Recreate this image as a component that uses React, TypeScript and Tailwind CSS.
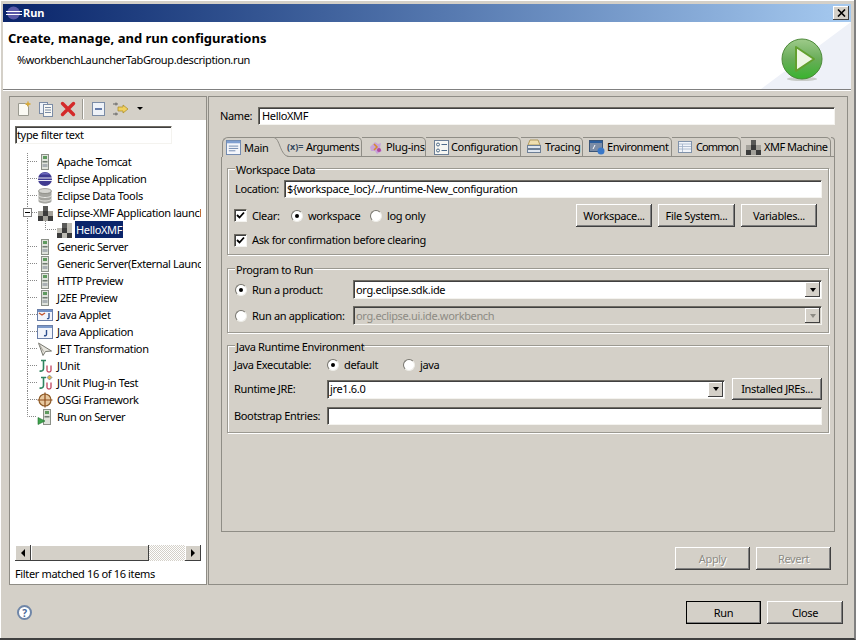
import React from "react";

const sunken =
  "border border-t-[#6f6c64] border-l-[#6f6c64] border-r-[#f4f3ef] border-b-[#f4f3ef] shadow-[inset_1px_1px_0_#404040]";

function ServerIcon() {
  return (
    <svg width="16" height="16" viewBox="0 0 16 16">
      <rect x="4.500" y="0.500" width="7" height="15" fill="#dfe3dc" stroke="#8b9088" />
      <rect x="6" y="2" width="4" height="3" fill="#5f9a5f" />
      <rect x="5.500" y="7" width="5" height="1.500" fill="#6f7a70" />
      <rect x="5.500" y="10" width="5" height="3" fill="#a9b0b4" />
    </svg>
  );
}

function EclipseIcon() {
  return (
    <svg width="16" height="16" viewBox="0 0 16 16">
      <circle cx="8" cy="8" r="7" fill="#3f3a90" />
      <path d="M0 7h16M0 9.500h16" stroke="#fff" strokeWidth="0.900" />
      <path d="M3 3.500a7 7 0 0 1 10 0" fill="#6d68bc" />
    </svg>
  );
}

function DbIcon() {
  return (
    <svg width="16" height="16" viewBox="0 0 16 16">
      <path d="M1.500 3v10c0 1.500 3 2.500 6.500 2.500s6.500-1 6.500-2.500V3z" fill="#a5a5a0" />
      <ellipse cx="8" cy="3" rx="6.500" ry="2.500" fill="#d6d6d2" stroke="#77776f" strokeWidth="0.600" />
      <path d="M1.500 7c0 1.500 3 2.500 6.500 2.500s6.500-1 6.500-2.500M1.500 10.500c0 1.500 3 2.500 6.500 2.500s6.500-1 6.500-2.500" fill="none" stroke="#e8e8e4" />
    </svg>
  );
}

function XmfIcon({ light }: { light?: boolean }) {
  const a = light ? "#bdbbb3" : "#a3a19a";
  const b = "#3c3c3c";
  return (
    <svg width="16" height="16" viewBox="0 0 16 16">
      <rect x="6" y="1" width="5" height="5" fill="#5a5a58" />
      <rect x="11" y="1" width="5" height="5" fill={light ? a : "none"} />
      <rect x="1" y="6" width="5" height="5" fill={a} />
      <rect x="6" y="6" width="5" height="5" fill={b} />
      <rect x="11" y="6" width="5" height="5" fill={a} />
      <rect x="1" y="11" width="5" height="5" fill={b} />
      <rect x="6" y="11" width="5" height="5" fill={a} />
      <rect x="11" y="11" width="5" height="5" fill={b} />
    </svg>
  );
}

function AppletIcon() {
  return (
    <svg width="16" height="16" viewBox="0 0 16 16">
      <rect x="0.500" y="2.500" width="15" height="11" fill="#f2f4fa" stroke="#6a7fa8" />
      <rect x="1" y="3" width="14" height="2" fill="#6f8fc4" />
      <path d="M2 6l3 2 3-2" fill="none" stroke="#c2552d" strokeWidth="1.400" />
      <path d="M12 6v4.500c0 1-1 1.500-2 1" fill="none" stroke="#2d4f8f" strokeWidth="1.300" />
    </svg>
  );
}

function JavaAppIcon() {
  return (
    <svg width="16" height="16" viewBox="0 0 16 16">
      <rect x="0.500" y="1.500" width="15" height="13" fill="#f2f5fb" stroke="#6a7fa8" />
      <rect x="1" y="2" width="14" height="2" fill="#7d9bcc" />
      <path d="M9.500 6v4.500c0 1-1 1.500-2.500 1" fill="none" stroke="#2d4f8f" strokeWidth="1.400" />
    </svg>
  );
}

function JetIcon() {
  return (
    <svg width="16" height="16" viewBox="0 0 16 16">
      <path d="M1.500 2l13 8-6 .5-2.500 4z" fill="#e6e4dc" stroke="#77776f" />
      <path d="M1.500 2l5 8.500" stroke="#a5a39b" fill="none" />
    </svg>
  );
}

function JUnitIcon({ plugin }: { plugin?: boolean }) {
  return (
    <svg width="16" height="16" viewBox="0 0 16 16">
      <path d="M6.500 2.500v8c0 2-1.500 3-4 2.500M4 2.500h5" fill="none" stroke="#2f8560" strokeWidth="1.600" />
      <path d="M10 7.500v5c0 2 4 2 4 0v-5" fill="none" stroke="#c0455f" strokeWidth="1.300" />
      {plugin && <path d="M12.500 0l2.500 2.500-2.500 2.500L10 2.500z" fill="#e0b64a" stroke="#4a6fb0" strokeWidth="0.600" />}
    </svg>
  );
}

function OsgiIcon() {
  return (
    <svg width="16" height="16" viewBox="0 0 16 16">
      <circle cx="8" cy="8" r="6" fill="#e8c9a0" stroke="#8e5c28" strokeWidth="1.200" />
      <path d="M8 0.500v15M0.500 8h15" stroke="#8e4e1c" strokeWidth="1.200" />
    </svg>
  );
}

function RunServerIcon() {
  return (
    <svg width="16" height="16" viewBox="0 0 16 16">
      <rect x="6.500" y="0.500" width="7" height="15" fill="#dfe3dc" stroke="#8b9088" />
      <rect x="8" y="2" width="4" height="3" fill="#5f9a5f" />
      <rect x="7.500" y="7" width="5" height="1.500" fill="#6f7a70" />
      <path d="M1 8.500l7 3.500-7 3.500z" fill="#3fa34d" stroke="#22702f" strokeWidth="0.600" />
    </svg>
  );
}

const treeItems: { label: string; icon: React.ReactNode }[] = [
  { label: "Apache Tomcat", icon: <ServerIcon /> },
  { label: "Eclipse Application", icon: <EclipseIcon /> },
  { label: "Eclipse Data Tools", icon: <DbIcon /> },
  { label: "Eclipse-XMF Application launch", icon: <XmfIcon /> },
  { label: "HelloXMF", icon: <XmfIcon light /> },
  { label: "Generic Server", icon: <ServerIcon /> },
  { label: "Generic Server(External Launc", icon: <ServerIcon /> },
  { label: "HTTP Preview", icon: <ServerIcon /> },
  { label: "J2EE Preview", icon: <ServerIcon /> },
  { label: "Java Applet", icon: <AppletIcon /> },
  { label: "Java Application", icon: <JavaAppIcon /> },
  { label: "JET Transformation", icon: <JetIcon /> },
  { label: "JUnit", icon: <JUnitIcon /> },
  { label: "JUnit Plug-in Test", icon: <JUnitIcon plugin /> },
  { label: "OSGi Framework", icon: <OsgiIcon /> },
  { label: "Run on Server", icon: <RunServerIcon /> },
];

function TreeRow({ label, icon, index }: { label: string; icon: React.ReactNode; index: number }) {
  const last = index === treeItems.length - 1;
  if (index === 4) {
    return (
      <div className="flex h-[17px] items-center whitespace-nowrap pl-[12px]">
        <svg width="29" height="17" className="shrink-0">
          <path d="M0.500 0V17M18.500 0V8.500H29" fill="none" stroke="#888" strokeDasharray="1 1" />
        </svg>
        <div className="flex w-[16px] shrink-0 justify-center">{icon}</div>
        <span className="ml-[3px] flex h-[17px] items-center bg-[#0a246a] px-[1px] text-white">{label}</span>
      </div>
    );
  }
  return (
    <div className="flex h-[17px] items-center whitespace-nowrap pl-[12px]">
      <div className="relative h-[17px] w-[10px] shrink-0">
        <svg width="10" height="17">
          <path d={last ? "M0.500 0V8.500H10" : "M0.500 0V17M1 8.500H10"} fill="none" stroke="#888" strokeDasharray="1 1" />
        </svg>
        {index === 3 && (
          <div className="absolute left-[-4px] top-[4px] flex h-[9px] w-[9px] items-center justify-center border border-[#808080] bg-white">
            <div className="h-px w-[5px] bg-black" />
          </div>
        )}
      </div>
      <div className="flex w-[16px] shrink-0 justify-center">{icon}</div>
      <span className="ml-[4px]">{label}</span>
    </div>
  );
}

function RaisedButton({
  children,
  className = "",
  disabled,
  isDefault,
}: {
  children: React.ReactNode;
  className?: string;
  disabled?: boolean;
  isDefault?: boolean;
}) {
  return (
    <button
      type="button"
      className={`flex items-center justify-center bg-[#d4d0c8] shadow-[inset_-1px_-1px_0_#404040,inset_1px_1px_0_#ffffff,inset_-2px_-2px_0_#808080] ${
        isDefault ? "outline outline-1 -outline-offset-1 outline-black" : ""
      } ${disabled ? "text-[#8d8b84] [text-shadow:1px_1px_0_#fff]" : ""} ${className}`}
    >
      {children}
    </button>
  );
}

function Radio({ on }: { on?: boolean }) {
  return (
    <span className="flex h-[12px] w-[12px] shrink-0 items-center justify-center rounded-full border border-t-[#77756e] border-l-[#77756e] border-r-[#eeede8] border-b-[#eeede8] bg-white">
      {on && <span className="h-[4px] w-[4px] rounded-full bg-black" />}
    </span>
  );
}

function Checkbox() {
  return (
    <span className={`flex h-[13px] w-[13px] shrink-0 items-center justify-center bg-white ${sunken}`}>
      <svg width="9" height="9" viewBox="0 0 9 9">
        <path d="M1 4l2.500 2.500L8 1.500" fill="none" stroke="#000" strokeWidth="1.800" />
      </svg>
    </span>
  );
}

function Combo({ value, disabled, className = "" }: { value: string; disabled?: boolean; className?: string }) {
  return (
    <div className={`flex h-[19px] items-center ${disabled ? "bg-[#d4d0c8] text-[#8d8b84]" : "bg-white"} ${sunken} ${className}`}>
      <span className="flex-1 pl-[2px]">{value}</span>
      <span className="mr-px flex h-[15px] w-[15px] items-center justify-center bg-[#d4d0c8] shadow-[inset_-1px_-1px_0_#404040,inset_1px_1px_0_#ffffff]">
        <span className={`h-0 w-0 border-x-[3.5px] border-t-[4px] border-x-transparent ${disabled ? "border-t-[#8d8b84]" : "border-t-black"}`} />
      </span>
    </div>
  );
}

function Group({ title, children, className = "" }: { title: string; children: React.ReactNode; className?: string }) {
  return (
    <div className={`relative border border-[#9b9991] px-[6px] shadow-[inset_1px_1px_0_#fff,1px_1px_0_#fff] ${className}`}>
      <span className="absolute left-[7px] top-[-5px] bg-[#d4d0c8] px-[1px] leading-[12px]">{title}</span>
      {children}
    </div>
  );
}

const tabs: { label: string; icon: React.ReactNode; width: string; pad: string; slot: string; track?: string }[] = [
  {
    width: "w-[75px]",
    pad: "pl-0",
    slot: "w-[19px]",
    label: "Arguments",
    track: "tracking-[-0.5px]",
    icon: <span className="text-[9px] font-bold tracking-normal text-[#34495e]">(x)=</span>,
  },
  {
    width: "w-[64px]",
    pad: "pl-[6px]",
    slot: "w-[18px]",
    label: "Plug-ins",
    icon: (
      <svg width="16" height="16" viewBox="0 0 16 16">
        <path d="M2 8l5-5 3 2 3-1-1 5 2 3-5 3-2-3-4 0z" fill="#c8a4d8" />
        <path d="M6 5l3 3-3 3" fill="none" stroke="#d68a2a" strokeWidth="1.500" />
        <circle cx="11" cy="11" r="2" fill="#b04aa0" />
      </svg>
    ),
  },
  {
    width: "w-[95px]",
    pad: "pl-[8px]",
    slot: "w-[17px]",
    label: "Configuration",
    icon: (
      <svg width="15" height="15" viewBox="0 0 15 15">
        <rect x="0.500" y="0.500" width="14" height="14" fill="#f6f6f2" stroke="#6d7f96" />
        <circle cx="4" cy="4.500" r="1.500" fill="none" stroke="#4d6a8a" />
        <circle cx="4" cy="10.500" r="1.500" fill="none" stroke="#4d6a8a" />
        <path d="M7.500 4.500H13M7.500 10.500H13" stroke="#4d6a8a" />
      </svg>
    ),
  },
  {
    width: "w-[62px]",
    pad: "pl-[6px]",
    slot: "w-[18px]",
    label: "Tracing",
    icon: (
      <svg width="14" height="16" viewBox="0 0 14 16">
        <path d="M3 1h8l2 5H1z" fill="#f0dfb0" stroke="#b09a60" />
        <rect x="0.500" y="6.500" width="13" height="3" fill="#dfe6ef" stroke="#6d7f96" />
        <rect x="0.500" y="10.500" width="13" height="3" fill="#dfe6ef" stroke="#6d7f96" />
      </svg>
    ),
  },
  {
    width: "w-[89px]",
    pad: "pl-[6px]",
    slot: "w-[18px]",
    label: "Environment",
    track: "tracking-[-0.45px]",
    icon: (
      <svg width="16" height="16" viewBox="0 0 16 16">
        <rect x="0.500" y="1.500" width="13" height="11" fill="#7b8ca6" stroke="#3a5578" />
        <rect x="1" y="2" width="12" height="2" fill="#2d5f9e" />
        <path d="M4 10l2-4" stroke="#fff" />
        <circle cx="12" cy="12" r="3.500" fill="#3a78c8" />
      </svg>
    ),
  },
  {
    width: "w-[69px]",
    pad: "pl-[6px]",
    slot: "w-[18px]",
    label: "Common",
    track: "tracking-[-0.9px]",
    icon: (
      <svg width="14" height="12" viewBox="0 0 14 12">
        <rect x="0.500" y="0.500" width="13" height="11" fill="#f2f5fa" stroke="#8092aa" />
        <path d="M1 3h12M1 5.500h12M1 8h12M4.500 3v8" stroke="#9fb0c6" strokeWidth="0.800" />
      </svg>
    ),
  },
  {
    width: "w-[90px]",
    pad: "pl-[4px]",
    slot: "w-[19px]",
    label: "XMF Machine",
    track: "tracking-[-0.5px]",
    icon: <XmfIcon />,
  },
];

function TabBar() {
  return (
    <div className="flex h-[20px] items-stretch">
      <div className="relative ml-[1px] flex w-[65px] shrink-0 items-center rounded-tl-[6px] border-l border-t border-[#8f8d86] bg-[#d4d0c8] pl-[3px]">
        <svg width="15" height="15" viewBox="0 0 16 16" className="mr-[3px]">
          <rect x="0.500" y="0.500" width="15" height="15" fill="#f4f6fb" stroke="#6d86ad" />
          <rect x="1" y="1" width="14" height="2.500" fill="#7f9fd0" />
          <path d="M3 6.500h10M3 9h10M3 11.500h7" stroke="#6d86ad" />
        </svg>
        <span>Main</span>
        <svg width="20" height="20" className="absolute right-[-3px] top-[-1px]">
          <path d="M0 0.500H4C10 1 10 19.500 19 19.500" fill="#d4d0c8" stroke="#8f8d86" />
        </svg>
      </div>
      {tabs.map((tab) => (
        <div
          key={tab.label}
          className={`flex ${tab.width} ${tab.pad} shrink-0 items-center whitespace-nowrap rounded-tr-[5px] border-b border-r border-t border-[#8f8d86]`}
        >
          <span className={`flex ${tab.slot} shrink-0 items-center`}>{tab.icon}</span>
          <span className={tab.track}>{tab.label}</span>
        </div>
      ))}
      <div className="flex-1 rounded-tr-[5px] border-b border-r border-t border-[#8f8d86]" />
    </div>
  );
}

function MainTab() {
  return (
    <div className="flex flex-col px-[5px] pt-[11px]">
      <Group title="Workspace Data" className="h-[87px] pt-[11px]">
        <div className="flex h-[18px] items-center">
          <span className="w-[50px] pl-px">Location:</span>
          <div className={`flex h-[18px] flex-1 items-center bg-white pl-[2px] ${sunken}`}>
            {"${workspace_loc}/../runtime-New_configuration"}
          </div>
        </div>
        <div className="mt-[6px] flex h-[23px] items-center">
          <Checkbox />
          <span className="ml-[5px] w-[39px]">Clear:</span>
          <Radio on />
          <span className="ml-[5px] w-[62px]">workspace</span>
          <Radio />
          <span className="ml-[5px]">log only</span>
          <div className="ml-auto mr-[5px] flex gap-[6px]">
            <RaisedButton className="h-[23px] w-[76px]">Workspace...</RaisedButton>
            <RaisedButton className="h-[23px] w-[77px]">File System...</RaisedButton>
            <RaisedButton className="h-[23px] w-[76px]">Variables...</RaisedButton>
          </div>
        </div>
        <div className="mt-[6px] flex h-[14px] items-center">
          <Checkbox />
          <span className="ml-[5px]">Ask for confirmation before clearing</span>
        </div>
      </Group>

      <Group title="Program to Run" className="mt-[13px] h-[65px] pt-[11px]">
        <div className="flex h-[19px] items-center">
          <span className="ml-[1px]"><Radio on /></span>
          <span className="ml-[5px] w-[101px]">Run a product:</span>
          <Combo value="org.eclipse.sdk.ide" className="flex-1" />
        </div>
        <div className="mt-[7px] flex h-[19px] items-center">
          <span className="ml-[1px]"><Radio /></span>
          <span className="ml-[5px] w-[101px]">Run an application:</span>
          <Combo value="org.eclipse.ui.ide.workbench" disabled className="flex-1" />
        </div>
      </Group>

      <Group title="Java Runtime Environment" className="mt-[12px] h-[88px] pt-[12px]">
        <div className="flex h-[14px] items-center">
          <span className="w-[93px]">Java Executable:</span>
          <Radio on />
          <span className="ml-[5px] w-[59px]">default</span>
          <Radio />
          <span className="ml-[5px]">java</span>
        </div>
        <div className="mt-[6px] flex h-[22px] items-center">
          <span className="w-[93px]">Runtime JRE:</span>
          <Combo value="jre1.6.0" className="w-[398px]" />
          <RaisedButton className="ml-[7px] h-[22px] w-[90px]">Installed JREs...</RaisedButton>
        </div>
        <div className="mt-[7px] flex h-[18px] items-center">
          <span className="w-[93px]">Bootstrap Entries:</span>
          <div className={`h-[18px] flex-1 bg-white ${sunken}`} />
        </div>
      </Group>
    </div>
  );
}

function PlayIcon() {
  return (
    <svg width="42" height="44" viewBox="0 0 42 44">
      <defs>
        <linearGradient id="ball" x1="0" y1="0" x2="0" y2="1">
          <stop offset="0" stopColor="#9ecb8a" />
          <stop offset="0.5" stopColor="#6aad5a" />
          <stop offset="1" stopColor="#38b32e" />
        </linearGradient>
      </defs>
      <ellipse cx="21" cy="41" rx="15" ry="2" fill="#c8cbc8" />
      <circle cx="21" cy="21" r="20" fill="url(#ball)" stroke="#4d8a3a" strokeWidth="1" />
      <path d="M15 9l18 12-18 12z" fill="#eef6e4" stroke="#62a02e" strokeWidth="2" strokeLinejoin="round" />
    </svg>
  );
}

export default function App() {
  return (
    <div className="flex h-[640px] w-[856px] flex-col overflow-hidden border-b-2 border-r-2 border-b-[#404040] border-r-[#808080] bg-[#d4d0c8] pt-[4px] font-['Noto_Sans','DejaVu_Sans',sans-serif] text-[11px] leading-[12px] tracking-[-0.35px] text-black shadow-[inset_1px_1px_0_#fff]">
      <div className="mx-[3px] flex h-[18px] shrink-0 items-center bg-gradient-to-r from-[#0a246a] to-[#a6caf0] pl-[3px] pr-[2px] text-white">
        <svg width="16" height="14" viewBox="0 0 16 14">
          <circle cx="7.500" cy="7" r="6.500" fill="#5a5aa8" />
          <path d="M0 5.500h16M0 8.500h16" stroke="#fff" strokeWidth="1" />
        </svg>
        <span className="ml-[1px] font-bold tracking-normal">Run</span>
        <button
          type="button"
          className="ml-auto flex h-[14px] w-[16px] items-center justify-center bg-[#d4d0c8] shadow-[inset_-1px_-1px_0_#404040,inset_1px_1px_0_#ffffff]"
        >
          <svg width="9" height="8" viewBox="0 0 9 8">
            <path d="M1 0.500L8 7.500M8 0.500L1 7.500" stroke="#000" strokeWidth="1.600" />
          </svg>
        </button>
      </div>

      <div className="relative mx-[3px] h-[68px] shrink-0 overflow-hidden border-b border-b-[#808080] bg-white pl-[5px] pt-[9px] shadow-[0_1px_0_#fff]">
        <div className="text-[13px] font-bold leading-[15px] tracking-normal">Create, manage, and run configurations</div>
        <div className="ml-[9px] mt-[7px] leading-[13px]">%workbenchLauncherTabGroup.description.run</div>
        <svg width="110" height="67" className="absolute right-0 top-0">
          <path d="M20 67L110 0V67z" fill="#eef1f8" />
        </svg>
        <div className="absolute right-[28px] top-[16px]">
          <PlayIcon />
        </div>
      </div>

      <div className="flex h-[495px] shrink-0 pl-[9px] pt-[6px]">
        <div className="flex w-[198px] shrink-0 flex-col border border-[#8f8d86] bg-white">
          <div className="flex h-[23px] shrink-0 items-center bg-[#d4d0c8] pl-[6px]">
            <svg width="16" height="16" viewBox="0 0 16 16">
              <path d="M2.500 2.500h7l3 3v9h-10z" fill="#fbfaf4" stroke="#9a9a90" />
              <path d="M12 0.500v5M9.500 3h5" stroke="#d9a72a" strokeWidth="1.300" />
            </svg>
            <svg width="16" height="16" viewBox="0 0 16 16" className="ml-[6px]">
              <rect x="1.500" y="1.500" width="8" height="11" fill="#eef2f8" stroke="#7b8ca6" />
              <rect x="5.500" y="3.500" width="9" height="12" fill="#f8f8f4" stroke="#7b8ca6" />
              <path d="M7 6.500h6M7 9h6M7 11.500h6" stroke="#7b8ca6" />
            </svg>
            <svg width="16" height="16" viewBox="0 0 16 16" className="ml-[6px]">
              <path d="M2.500 2.500L13.500 13.500M13.500 2.500L2.500 13.500" stroke="#d42a2a" strokeWidth="3.400" strokeLinecap="round" />
            </svg>
            <div className="ml-[6px] h-[20px] w-px bg-[#9b9991] shadow-[1px_0_0_#fff]" />
            <svg width="14" height="14" viewBox="0 0 14 14" className="ml-[9px]">
              <rect x="0.500" y="0.500" width="12" height="13" fill="#eef2f8" stroke="#7b8ca6" />
              <path d="M3 7h7" stroke="#2a4a8a" strokeWidth="1.400" />
            </svg>
            <svg width="16" height="16" viewBox="0 0 16 16" className="ml-[7px]">
              <path d="M0 3h5M0 13h5" stroke="#666" />
              <path d="M3 1.500v3M3 11.500v3" stroke="#666" />
              <path d="M5 6h5V4l5 4-5 4v-2H5z" fill="#f0d060" stroke="#a98a20" strokeWidth="0.700" />
            </svg>
            <span className="ml-[8px] h-0 w-0 border-x-[3px] border-t-[3px] border-x-transparent border-t-black" />
          </div>
          <div className="flex flex-1 flex-col px-[5px] pt-[6px]">
            <div className={`flex h-[18px] w-[157px] shrink-0 items-center bg-white pl-[1px] ${sunken}`}>type filter text</div>
            <div className="mt-[9px] w-[186px] overflow-hidden">
              {treeItems.map((item, i) => (
                <TreeRow key={item.label} label={item.label} icon={item.icon} index={i} />
              ))}
            </div>
            <div className="mt-auto flex h-[16px] w-[186px] shrink-0 bg-[repeating-conic-gradient(#ffffff_0%_25%,#d4d0c8_0%_50%)] bg-[length:2px_2px]">
              <div className="flex h-[16px] w-[16px] items-center justify-center bg-[#d4d0c8] shadow-[inset_-1px_-1px_0_#404040,inset_1px_1px_0_#ffffff]">
                <span className="h-0 w-0 border-y-[4px] border-r-[4px] border-y-transparent border-r-black" />
              </div>
              <div className="h-[16px] w-[118px] bg-[#d4d0c8] shadow-[inset_-1px_-1px_0_#404040,inset_1px_1px_0_#ffffff]" />
              <div className="ml-auto flex h-[16px] w-[16px] items-center justify-center bg-[#d4d0c8] shadow-[inset_-1px_-1px_0_#404040,inset_1px_1px_0_#ffffff]">
                <span className="h-0 w-0 border-y-[4px] border-l-[4px] border-y-transparent border-l-black" />
              </div>
            </div>
            <div className="flex h-[23px] shrink-0 items-center pt-[2px]">Filter matched 16 of 16 items</div>
          </div>
        </div>

        <div className="ml-px flex w-[640px] shrink-0 flex-col border border-[#8f8d86] pl-[12px] pr-[12px] pt-[10px]">
          <div className="flex h-[18px] shrink-0 items-center">
            <span className="-ml-px w-[38px]">Name:</span>
            <div className={`flex h-[18px] flex-1 items-center bg-white pl-[3px] ${sunken}`}>HelloXMF</div>
          </div>
          <div className="mt-[12px]">
            <TabBar />
          </div>
          <div className="h-[375px] shrink-0 border-b border-l border-r border-[#8f8d86]">
            <MainTab />
          </div>
          <div className="mt-[15px] flex justify-end gap-[6px] pr-[4px]">
            <RaisedButton disabled className="h-[23px] w-[75px]">Apply</RaisedButton>
            <RaisedButton disabled className="h-[23px] w-[75px]">Revert</RaisedButton>
          </div>
        </div>
      </div>

      <div className="flex flex-1 items-start pl-[17px] pr-[11px] pt-[16px]">
        <div className="mt-[4px] flex h-[15px] w-[15px] items-center justify-center rounded-full border-2 border-[#6f86a8] bg-white text-[10px] font-bold text-[#4a6a9a]">?</div>
        <div className="ml-auto flex gap-[6px]">
          <RaisedButton isDefault className="h-[23px] w-[75px]">Run</RaisedButton>
          <RaisedButton className="h-[23px] w-[76px]">Close</RaisedButton>
        </div>
      </div>
    </div>
  );
}
